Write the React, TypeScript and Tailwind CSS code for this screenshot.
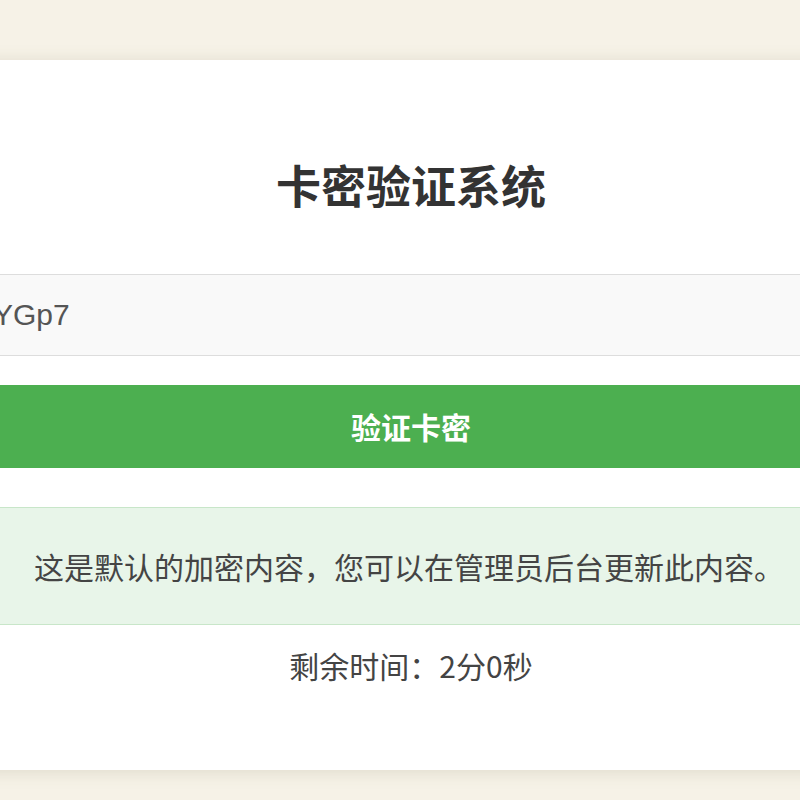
export default function App() {
  return (
    <div className="h-[800px] w-[800px] overflow-hidden bg-[#f6f2e7] pt-[60px] font-['Noto_Sans_CJK_SC',sans-serif]">
      <div className="ml-[-58px] w-[938px] bg-white px-[30px] pt-[98px] pb-[85px] shadow-[0_2px_16px_rgba(120,110,80,0.18)]">
        <h1 className="text-center text-[45px] font-bold leading-[54px] text-[#333]">卡密验证系统</h1>

        <input
          readOnly
          value="YGp7"
          className="mt-[62px] block h-[82px] w-full border border-[#ddd] bg-[#f9f9f9] px-[20px] font-['Liberation_Sans',sans-serif] text-[30px] text-[#555] outline-none"
        />

        <button className="mt-[29px] block h-[83px] w-full bg-[#4caf50] text-[30px] font-bold text-white">
          验证卡密
        </button>

        <div className="mt-[39px] flex h-[118px] items-center justify-center border border-[#c8e6c9] bg-[#e8f5e9] pr-[4px]">
          <p className="text-[30px] leading-[40px] text-[#444]">
            这是默认的加密内容，您可以在管理员后台更新此内容。
          </p>
        </div>

        <p className="mt-[20px] text-center text-[30px] leading-[40px] text-[#444]">剩余时间：2分0秒</p>
      </div>
    </div>
  )
}
